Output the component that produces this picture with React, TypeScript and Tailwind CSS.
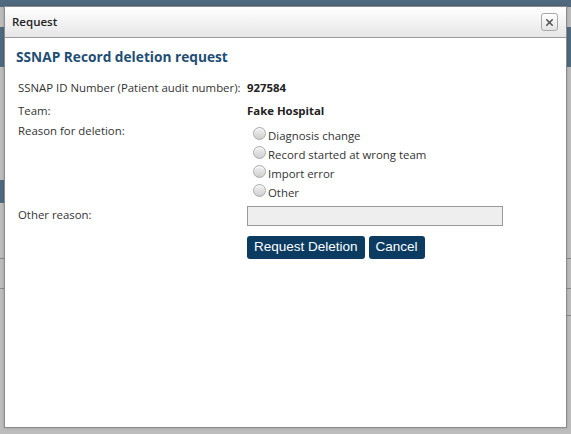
import { X } from 'lucide-react';

const reasons = ['Diagnosis change', 'Record started at wrong team', 'Import error', 'Other'];

function Radio({ label }: { label: string }) {
  return (
    <label className="flex h-[19px] items-center">
      <span className="ml-[6px] mr-[2px] h-[13px] w-[13px] -translate-y-[2px] rounded-full border border-[#a9a9a9] bg-gradient-to-b from-[#f2f2f2] to-[#cfcfcf] shadow-[inset_0_1px_1px_rgba(255,255,255,0.8)]" />
      <span>{label}</span>
    </label>
  );
}

export default function App() {
  return (
    <div className="relative h-[434px] w-[571px] overflow-hidden bg-[#bdbdbd] font-['Open_Sans',sans-serif]">
      {/* page behind the overlay */}
      <div className="absolute left-0 top-0 h-[7px] w-full bg-[#4f6a7f]" />
      <div className="absolute left-0 top-[27px] h-[40px] w-full bg-[#4f6a7f]" />
      <div className="absolute left-0 top-[180px] h-[23px] w-[4px] bg-[#4f6a7f]" />
      <div className="absolute left-0 top-[258px] h-px w-full bg-[#8a8a8a]" />
      <div className="absolute left-0 top-[288px] h-px w-full bg-[#8a8a8a]" />
      <div className="absolute right-0 top-[315px] h-px w-[6px] bg-[#8a8a8a]" />

      {/* dialog */}
      <div className="absolute left-[4px] top-[6px] flex h-[422px] w-[563px] flex-col border border-[#8c8c8c] bg-white shadow-[0_0_3px_rgba(0,0,0,0.2)]">
        <div className="flex h-[31px] shrink-0 items-center justify-between border-b border-[#9a9a9a] bg-gradient-to-b from-white to-[#e6e6e6] pl-[7px] pr-[8px]">
          <span className="text-[11.5px] font-semibold text-[#222]">Request</span>
          <button className="flex h-[18px] w-[17px] items-center justify-center rounded-[3px] border border-[#a8a8a8] bg-gradient-to-b from-white to-[#e4e4e4]">
            <X className="h-[11px] w-[11px] text-[#555]" strokeWidth={3.5} />
          </button>
        </div>

        <div className="flex flex-col pl-[11px] pt-[9px] text-[11.4px] text-[#333]">
          <h1 className="h-[20px] text-[13.7px] font-bold leading-[20px] text-[#1f4e74]">SSNAP Record deletion request</h1>

          <div className="mt-[11px] flex h-[23px] pl-[2px]">
            <div className="w-[229px] whitespace-nowrap leading-[20px]">SSNAP ID Number (Patient audit number):</div>
            <div className="font-bold leading-[20px] text-[#222]">927584</div>
          </div>

          <div className="flex h-[20px] pl-[2px]">
            <div className="w-[229px] leading-[20px]">Team:</div>
            <div className="font-bold leading-[20px] text-[#222]">Fake Hospital</div>
          </div>

          <div className="flex h-[85px] pl-[2px]">
            <div className="w-[229px] leading-[20px]">Reason for deletion:</div>
            <div className="pt-[5px]">
              {reasons.map((r) => (
                <Radio key={r} label={r} />
              ))}
            </div>
          </div>

          <div className="flex h-[30px] items-start pl-[2px]">
            <div className="w-[229px] leading-[17px]">Other reason:</div>
            <input className="h-[20px] w-[256px] border border-[#999] bg-[#eeeeee] outline-none" disabled />
          </div>

          <div className="flex gap-[4px] pl-[231px] font-['Liberation_Sans',sans-serif] text-[13.5px] text-white">
            <button className="h-[23px] rounded-[3px] bg-[#0b3b60] px-[7px]">Request Deletion</button>
            <button className="h-[23px] rounded-[3px] bg-[#0b3b60] px-[7px]">Cancel</button>
          </div>
        </div>
      </div>
    </div>
  );
}
